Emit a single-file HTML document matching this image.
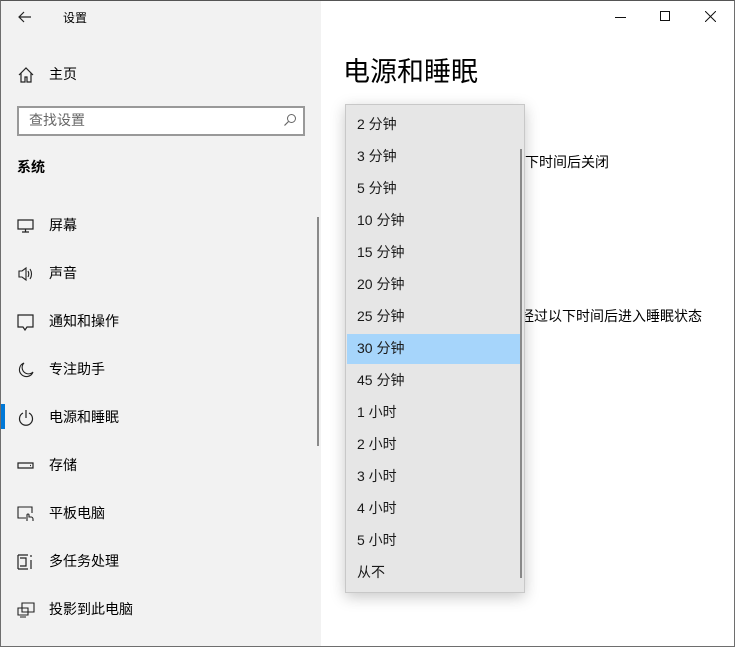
<!DOCTYPE html>
<html><head><meta charset="utf-8"><style>
*{margin:0;padding:0;box-sizing:border-box}
body{width:735px;height:647px;overflow:hidden;background:#fff;font-family:"Liberation Sans","Noto Sans CJK SC",sans-serif;color:#000;position:relative}
.frame{position:absolute;left:0;top:0;width:735px;height:647px;border:1px solid #6e6e6e;border-top-color:#555;pointer-events:none;z-index:10}
.side{position:absolute;left:0;top:0;width:321px;height:647px;background:#f2f2f2}
.t{position:absolute;font-size:14px;line-height:20px;white-space:nowrap}
.ic{position:absolute;left:17px;width:18px;height:18px}
.dd{position:absolute;left:345px;top:104px;width:180px;height:489px;background:#e6e6e6;border:1px solid #c8c8c8;box-shadow:0 4px 14px rgba(0,0,0,.22)}
.it{position:absolute;left:11px;font-size:14px;line-height:20px;color:#1a1a1a}
</style></head><body>
<div class="side">
<svg style="position:absolute;left:17px;top:10px" width="16" height="14" viewBox="0 0 16 14"><path d="M14 7H2M7 2L2 7l5 5" fill="none" stroke="#222" stroke-width="1.2"/></svg>
<div class="t" style="left:63px;top:8px;font-size:12px">设置</div>
<svg class="ic" style="top:66px" viewBox="0 0 18 18"><path d="M2 9L9 2l7 7M4 7v9h4v-5h2v5h4V7" fill="none" stroke="#222" stroke-width="1.2"/></svg>
<div class="t" style="left:49px;top:64px">主页</div>
<div style="position:absolute;left:17px;top:106px;width:288px;height:30px;border:2px solid #999;background:#fff"></div>
<div class="t" style="left:29px;top:110px;color:#666">查找设置</div>
<svg style="position:absolute;left:283px;top:113px" width="14" height="14" viewBox="0 0 14 14"><circle cx="8.5" cy="5.5" r="4" fill="none" stroke="#666"/><path d="M5.5 8.5L1.5 12.5" stroke="#666" stroke-width="1.2"/></svg>
<div class="t" style="left:17px;top:157px;font-weight:bold">系统</div>
<svg class="ic" style="top:217px" viewBox="0 0 18 18"><path d="M1 3h15v9H1zM8.5 12v3M5 15h7" fill="none" stroke="#222" stroke-width="1.2"/></svg>
<div class="t" style="left:49px;top:215px">屏幕</div>
<svg class="ic" style="top:265px" viewBox="0 0 18 18"><path d="M2 6h3l4-3v12l-4-3H2zM11 6c1 2 1 4 0 6M13 4c2 3 2 7 0 10" fill="none" stroke="#222" stroke-width="1.1"/></svg>
<div class="t" style="left:49px;top:263px">声音</div>
<svg class="ic" style="top:313px" viewBox="0 0 18 18"><path d="M1 2h15v12H10l-2 3-2-3H1z" fill="none" stroke="#222" stroke-width="1.2"/></svg>
<div class="t" style="left:49px;top:311px">通知和操作</div>
<svg class="ic" style="top:361px" viewBox="0 0 18 18"><path d="M7 2a7 7 0 1 0 9 9A6 6 0 0 1 7 2z" fill="none" stroke="#222" stroke-width="1.1"/></svg>
<div class="t" style="left:49px;top:359px">专注助手</div>
<div style="position:absolute;left:0;top:404px;width:5px;height:25px;background:#0078d7"></div>
<svg class="ic" style="top:409px" viewBox="0 0 18 18"><path d="M6 4a6.5 6.5 0 1 0 6 0M9 1v8" fill="none" stroke="#222" stroke-width="1.2"/></svg>
<div class="t" style="left:49px;top:407px">电源和睡眠</div>
<svg class="ic" style="top:457px" viewBox="0 0 18 18"><path d="M1 6h15v5H1zM13 8.5h1" fill="none" stroke="#222" stroke-width="1.2"/></svg>
<div class="t" style="left:49px;top:455px">存储</div>
<svg class="ic" style="top:505px" viewBox="0 0 18 18"><path d="M9 13H1V2h14v6M10 16v-6a1 1 0 0 1 2 0v2h2a2 2 0 0 1 2 2v2" fill="none" stroke="#222" stroke-width="1.1"/></svg>
<div class="t" style="left:49px;top:503px">平板电脑</div>
<svg class="ic" style="top:553px" viewBox="0 0 18 18"><path d="M1 2h10M1 16h10M1 2v14M3 5h6v8H3M14 2v2M14 7v9" fill="none" stroke="#222" stroke-width="1.2"/></svg>
<div class="t" style="left:49px;top:551px">多任务处理</div>
<svg class="ic" style="top:601px" viewBox="0 0 18 18"><path d="M5 2h12v9H5zM1 7h10v7H1zM3 16h6" fill="none" stroke="#222" stroke-width="1.1"/></svg>
<div class="t" style="left:49px;top:599px">投影到此电脑</div>
<div style="position:absolute;left:317px;top:217px;width:2px;height:229px;background:#8a8a8a"></div>
</div>
<div style="position:absolute;left:615px;top:17px;width:11px;height:1px;background:#111"></div>
<div style="position:absolute;left:660px;top:11px;width:10px;height:10px;border:1px solid #111"></div>
<svg style="position:absolute;left:705px;top:11px" width="11" height="11" viewBox="0 0 11 11"><path d="M0 0l11 11M11 0L0 11" stroke="#111"/></svg>
<div class="t" style="left:343px;top:55px;font-size:27px;line-height:34px">电源和睡眠</div>
<div class="t" style="left:511px;top:152px">、下时间后关闭</div>
<div class="t" style="left:520px;top:306px">经过以下时间后进入睡眠状态</div>
<div class="dd">
<div style="position:absolute;left:1px;top:229px;width:174px;height:30px;background:#a6d5fb"></div>
<div style="position:absolute;left:174px;top:44px;width:2px;height:429px;background:#888"></div>
<div class="it" style="top:9px">2 分钟</div>
<div class="it" style="top:41px">3 分钟</div>
<div class="it" style="top:73px">5 分钟</div>
<div class="it" style="top:105px">10 分钟</div>
<div class="it" style="top:137px">15 分钟</div>
<div class="it" style="top:169px">20 分钟</div>
<div class="it" style="top:201px">25 分钟</div>
<div class="it" style="top:233px">30 分钟</div>
<div class="it" style="top:265px">45 分钟</div>
<div class="it" style="top:297px">1 小时</div>
<div class="it" style="top:329px">2 小时</div>
<div class="it" style="top:361px">3 小时</div>
<div class="it" style="top:393px">4 小时</div>
<div class="it" style="top:425px">5 小时</div>
<div class="it" style="top:457px">从不</div>
</div>
<div class="frame"></div>
</body></html>
